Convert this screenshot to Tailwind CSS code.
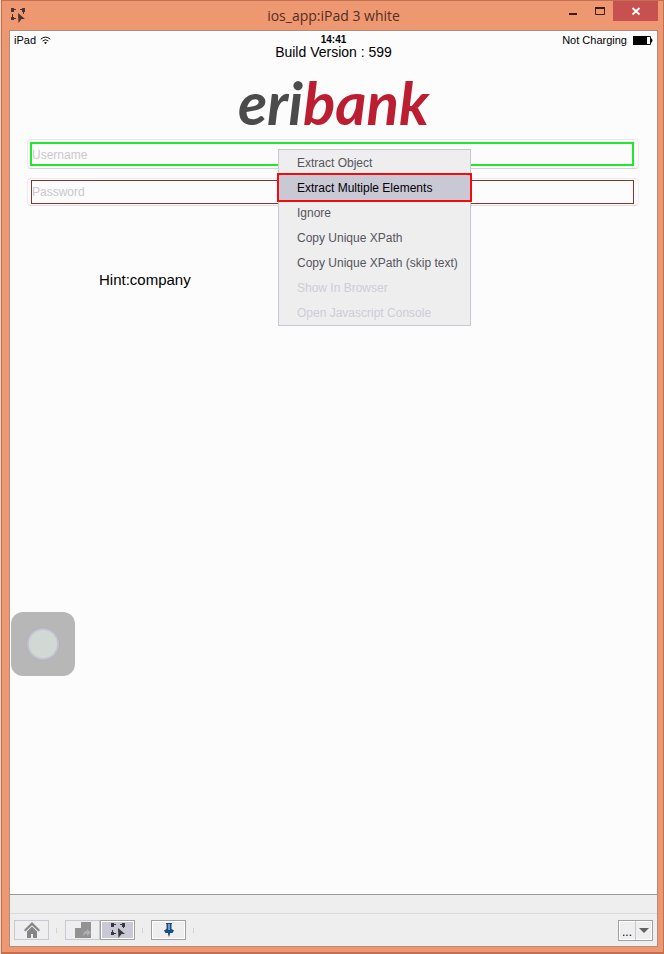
<!DOCTYPE html>
<html lang="en">
<head>
    <meta charset="UTF-8">
    <meta name="viewport" content="width=device-width, initial-scale=1.0">
    <title>ios_app:iPad 3 white</title>
    <script src="https://cdn.jsdelivr.net/npm/@tailwindcss/browser@4"></script>
</head>
<body class="bg-[#f6d5c8] pl-px font-['Liberation_Sans',Arial,sans-serif] text-black">
    <div class="min-h-screen flex flex-col bg-[#ee9872] border border-[#c27051] border-b-2 pl-[7px] pr-[5px] pb-[5px]">
        <!-- Title bar -->
        <header class="h-[29px] grid grid-cols-[1fr_auto_1fr]">
            <svg class="w-4 h-4 ml-px mt-[6px]" viewBox="0 0 16 16" fill="#4a3330">
                <path d="M1 1h3v1h2v1H4v2H1zM15 1h-3v1h-2v1h2v2h1v2h1V5h1zM1 10h1V7h1v3h1v1h2v1H4v1H1zM8 6l7 6h-3.500L8.500 16z"/>
            </svg>
            <h1 class="font-['Open_Sans',sans-serif] text-sm leading-[29px] text-[#552e20]">ios_app:iPad 3 white</h1>
            <div class="flex justify-end items-start">
                <button aria-label="Minimize" class="w-[27px] h-5 grid place-items-center">
                    <svg class="w-3 h-3" viewBox="0 0 12 12"><path d="M2 8h8v2H2z" fill="#3c1d12"/></svg>
                </button>
                <button aria-label="Maximize" class="w-[27px] h-5 grid place-items-center">
                    <svg class="w-3 h-3" viewBox="0 0 12 12"><path d="M1.500 3.500h9v6h-9z" fill="none" stroke="#3c1d12"/><path d="M1 2h10v2H1z" fill="#3c1d12"/></svg>
                </button>
                <button aria-label="Close" class="w-[45px] h-5 grid place-items-center bg-[#c75050]">
                    <svg class="w-3 h-3" viewBox="0 0 12 12"><path d="M2.500 3l7 6.500M9.500 3l-7 6.500" stroke="#fff" stroke-width="1.800"/></svg>
                </button>
            </div>
        </header>

        <div class="flex-1 flex flex-col bg-[#eeeeee] border border-[#b18b7b]">
            <!-- Device screen -->
            <main class="relative flex-1 bg-[#fcfcfc] border-b border-[#999999]">
                <div class="grid grid-cols-[1fr_auto_1fr] items-center h-[18px] px-1 text-[11px] leading-[18px]">
                    <div class="flex items-center gap-1">
                        <span>iPad</span>
                        <svg class="w-[11px] h-[9px]" viewBox="0 0 11 9" fill="none" stroke="#111">
                            <path d="M.7 3.200Q5.500-1 10.300 3.200M2.600 5Q5.500 2.500 8.400 5"/>
                            <path d="M4 6.500Q5.500 5.400 7 6.500L5.500 8.200z" fill="#111" stroke="none"/>
                        </svg>
                    </div>
                    <span class="font-bold text-[10px]">14:41</span>
                    <div class="flex items-center justify-end gap-[6px]">
                        <span>Not Charging</span>
                        <svg class="w-5 h-[9px]" viewBox="0 0 20 9"><path d="M.5.5h17v8H.500z" fill="none" stroke="#111"/><path d="M0 0h14v9H0zM18 2q3 2.500 0 5z"/></svg>
                    </div>
                </div>
                <p class="text-center text-sm leading-[6px]">Build Version : 599</p>
                <div class="mt-4 text-center font-['Lato',sans-serif] text-[60px] leading-[62px] font-bold italic text-[#4b4b4b]">eri<span class="text-[#bb1e30]">bank</span></div>

                <form class="relative mt-[6px] pl-[17px] pr-[18px]">
                    <div class="rounded-sm border border-[#e9e9e9] border-b-[#d4d4d8] p-[2px] pr-1">
                        <input type="text" aria-label="Username" placeholder="Username" class="block w-full h-6 border-2 border-[#22e82c] pt-px text-xs placeholder:text-[#c9c9cd] outline-none">
                    </div>
                    <div class="mt-[9px] rounded-sm border border-[#ececec] border-b-[#f6d5d2] p-px pl-[3px] pr-1">
                        <input type="password" aria-label="Password" placeholder="Password" class="block w-full h-6 border border-[#863630] text-xs placeholder:text-[#c9c9cd] outline-none">
                    </div>

                    <!-- Context menu -->
                    <ul role="menu" class="absolute z-10 left-[268px] top-[10px] w-[193px] border border-[#c8c8d4] bg-[#eeeeee] text-xs leading-[26px] text-[#55555d]">
                        <li><button type="button" role="menuitem" class="block w-full h-[25px] pl-[18px] text-left">Extract Object</button></li>
                        <li><button type="button" role="menuitem" class="block w-full h-[25px] pl-[18px] text-left bg-[#c9c9d6] text-black outline-2 outline-[#f20d0d]">Extract Multiple Elements</button></li>
                        <li><button type="button" role="menuitem" class="block w-full h-[25px] pl-[18px] text-left">Ignore</button></li>
                        <li><button type="button" role="menuitem" class="block w-full h-[25px] pl-[18px] text-left">Copy Unique XPath</button></li>
                        <li><button type="button" role="menuitem" class="block w-full h-[25px] pl-[18px] text-left">Copy Unique XPath (skip text)</button></li>
                        <li><button type="button" role="menuitem" disabled class="block w-full h-[25px] pl-[18px] text-left text-[#cdcdd6]">Show In Browser</button></li>
                        <li><button type="button" role="menuitem" disabled class="block w-full h-[25px] pl-[18px] text-left text-[#cdcdd6]">Open Javascript Console</button></li>
                    </ul>
                </form>
                <p class="mt-[62px] ml-[89px] text-[15px] leading-6">Hint:company</p>

                <!-- Floating assistive button -->
                <button aria-label="Assistive touch" class="absolute left-px top-[581px] size-16 rounded-xl bg-[#b7b7b7] grid place-items-center">
                    <span class="size-8 rounded-full border-2 border-[#c3c3cf] bg-[#d2d8d3] outline-1 outline-[#b2b2bf]"></span>
                </button>
            </main>

            <div class="h-[18px]"></div>

            <!-- Toolbar -->
            <footer class="h-[33px] flex items-center px-1 border-t border-[#dadada]">
                <button aria-label="Home" class="w-[35px] h-5 grid place-items-center border border-[#c8c8d4]">
                    <svg class="w-[18px] h-[18px]" viewBox="0 0 18 18" fill="#858585"><path d="M9 1l8 8-1.500 1.500L9 4.200 2.500 10.500 1 9z"/><path d="M9 5.500l5 5V17h-4v-4H8v4H4v-6.500z"/></svg>
                </button>
                <span class="w-px h-[5px] mx-[7px] bg-[#d2d2d2]"></span>
                <button aria-label="Reflect device" class="w-[35px] h-5 ml-px grid place-items-center border border-[#c8c8d4]">
                    <svg class="w-[18px] h-[18px]" viewBox="0 0 18 18"><path d="M7 1h10v16H1V7h6z" fill="#929292"/><path d="M9 15q0-5 4-5V8l4 3.500-4 3.500v-2.500q-2.500 0-4 2.500z" fill="#b0b0b0"/></svg>
                </button>
                <button aria-label="Object spy" class="w-[35px] h-5 grid place-items-center border border-[#a0a0a0] bg-[#c9c9d6] shadow-[inset_0_0_0_1px_#fff]">
                    <svg class="w-4 h-4" viewBox="0 0 16 16" fill="#383838">
                        <path d="M1 1h3v1h2v1H4v2H1zM15 1h-3v1h-2v1h2v2h1v1h1V5h1zM1 10h1V8h1v2h1v1h2v1H4v1H1zM8 6l7 6h-3.500L8.500 16z"/>
                    </svg>
                </button>
                <span class="w-px h-[5px] mx-[7px] bg-[#d2d2d2]"></span>
                <button aria-label="Pin" class="w-[35px] h-5 ml-px grid place-items-center border border-[#a0a0a0] shadow-[inset_0_0_0_1px_#fff]">
                    <svg class="w-[10px] h-4" viewBox="0 0 10 16" fill="#164f80"><path d="M2 1h6v1H7.500v5l2.500 1.500-1.500 2.500H6v1l-1 3-1-3v-1H1.500L0 8.500 2.500 7V2H2z"/><path d="M4 2.500h2v1H4zM4 4.500h2v1H4zM4 6.500h2v1H4z" fill="#dbe6ef"/></svg>
                </button>
                <span class="w-px h-[5px] mx-[7px] bg-[#d2d2d2]"></span>
                <div class="ml-auto flex h-[21px] border border-[#a0a0a0] shadow-[inset_0_0_0_1px_#fff]">
                    <button aria-label="More" class="w-[17px] text-xs leading-[22px] border-r border-[#c8c8d4]">...</button>
                    <button aria-label="Show list" class="w-4 grid place-items-center">
                        <svg class="w-[10px] h-[5px]" viewBox="0 0 10 5"><path d="M0 0h10L5 5z" fill="#626262"/></svg>
                    </button>
                </div>
            </footer>
        </div>
    </div>
</body>
</html>
